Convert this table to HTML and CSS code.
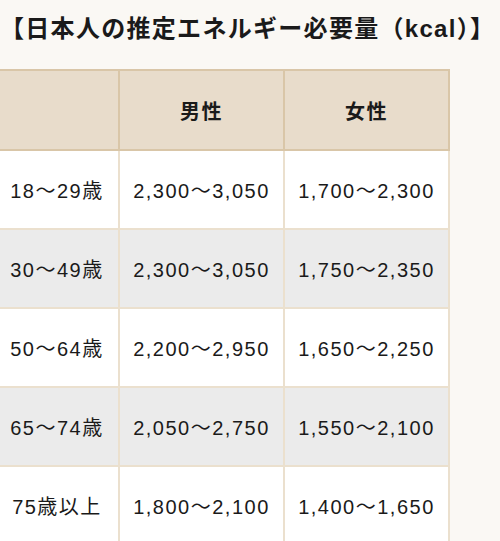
FILE: index.html
```html
<!DOCTYPE html>
<html lang="ja">
<head>
<meta charset="utf-8">
<link rel="stylesheet" href="styles.css">
</head>
<body>
<div class="page">
  <p class="title">【日本人の推定エネルギー必要量（kcal）】</p>
  <table class="energy">
    <colgroup>
      <col class="c-age">
      <col class="c-val">
      <col class="c-val">
    </colgroup>
    <thead>
      <tr><th></th><th>男性</th><th>女性</th></tr>
    </thead>
    <tbody>
      <tr><td>18～29歳</td><td>2,300～3,050</td><td>1,700～2,300</td></tr>
      <tr class="alt"><td>30～49歳</td><td>2,300～3,050</td><td>1,750～2,350</td></tr>
      <tr><td>50～64歳</td><td>2,200～2,950</td><td>1,650～2,250</td></tr>
      <tr class="alt"><td>65～74歳</td><td>2,050～2,750</td><td>1,550～2,100</td></tr>
      <tr><td>75歳以上</td><td>1,800～2,100</td><td>1,400～1,650</td></tr>
    </tbody>
  </table>
</div>
</body>
</html>
```
FILE: styles.css
```css
html, body {
  margin: 0;
  padding: 0;
  background: #faf8f4;
}
body {
  font-family: "Liberation Sans", "Noto Sans CJK JP", sans-serif;
  color: #1a1a1a;
}
.page {
  padding-top: 11px;
}
.title {
  margin: 0 0 22px;
  font-size: 24px;
  line-height: 36px;
  font-weight: bold;
  letter-spacing: 1.3px;
  white-space: nowrap;
}
.energy {
  margin-left: -6px;
  border-collapse: collapse;
  table-layout: fixed;
  width: 455px;
}
.c-age { width: 124px; }
.c-val { width: 165px; }
.energy th,
.energy td {
  text-align: center;
  vertical-align: middle;
  font-size: 20px;
  letter-spacing: 1.5px;
  padding: 0;
  white-space: nowrap;
}
.energy th {
  background: #e8dccb;
  border: 2px solid #d9c6a8;
  height: 78px;
  font-weight: bold;
}
.energy td {
  background: #ffffff;
  border: 2px solid #ebe0ce;
  height: 77px;
}
.energy tr.alt td {
  background: #ebebeb;
}
```
